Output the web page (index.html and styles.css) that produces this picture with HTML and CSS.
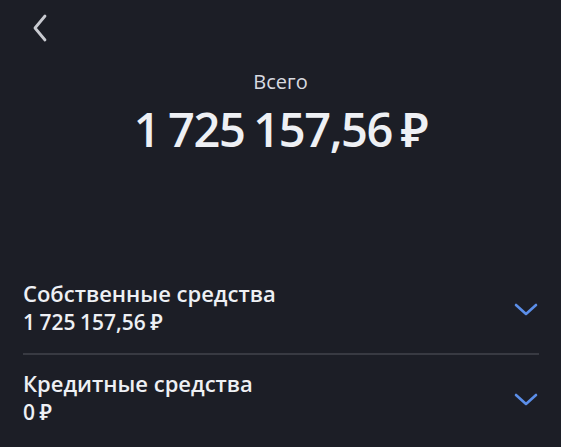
FILE: index.html
```html
<!DOCTYPE html>
<html lang="ru">
<head>
<meta charset="utf-8">
<link rel="stylesheet" href="styles.css">
</head>
<body>
<div class="screen">
  <div class="topbar">
    <svg class="back" width="16" height="28" viewBox="0 0 16 28"><path d="M13 2 L3 14 L13 26" fill="none" stroke="#c9cbd1" stroke-width="2.8" stroke-linecap="round" stroke-linejoin="round"/></svg>
  </div>
  <div class="total">
    <div class="total-label">Всего</div>
    <div class="total-value">1 725 157,56 ₽</div>
  </div>
  <div class="list">
    <div class="row">
      <div class="row-text">
        <div class="row-title">Собственные средства</div>
        <div class="row-value">1 725 157,56 ₽</div>
      </div>
      <svg class="chev" width="26" height="16" viewBox="0 0 26 16"><path d="M3 3 L13 12 L23 3" fill="none" stroke="#5b8ee8" stroke-width="2.6" stroke-linecap="round" stroke-linejoin="round"/></svg>
    </div>
    <div class="divider"></div>
    <div class="row">
      <div class="row-text">
        <div class="row-title">Кредитные средства</div>
        <div class="row-value">0 ₽</div>
      </div>
      <svg class="chev" width="26" height="16" viewBox="0 0 26 16"><path d="M3 3 L13 12 L23 3" fill="none" stroke="#5b8ee8" stroke-width="2.6" stroke-linecap="round" stroke-linejoin="round"/></svg>
    </div>
  </div>
</div>
</body>
</html>
```
FILE: styles.css
```css
html, body {
  margin: 0;
  padding: 0;
  background: #1c1e26;
}
.screen {
  width: 561px;
  height: 447px;
  background: #1c1e26;
  color: #eef0f4;
  font-family: "Open Sans", "Noto Sans", sans-serif;
  overflow: hidden;
}
.topbar {
  height: 56px;
  padding-left: 32px;
  padding-top: 14px;
  box-sizing: border-box;
}
.back {
  display: block;
}
.total {
  text-align: center;
}
.total-label {
  font-size: 20px;
  line-height: 26px;
  color: #d8dae0;
  margin-top: 13px;
}
.total-value {
  font-size: 47px;
  font-weight: 600;
  line-height: 60px;
  margin-top: 4px;
  letter-spacing: -1.4px;
  word-spacing: -2px;
}
.list {
  margin-top: 120px;
  padding: 0 22px 0 23px;
}
.row {
  display: flex;
  align-items: center;
  justify-content: space-between;
}
.row-title {
  font-size: 22px;
  line-height: 29px;
  font-weight: 600;
}
.row-value {
  font-size: 21px;
  line-height: 29px;
  font-weight: 600;
  word-spacing: -1px;
}
.chev {
  display: block;
  margin-top: 4px;
}
.divider {
  height: 2px;
  background: #383a42;
  margin: 16px 0 14px 0;
}
```
